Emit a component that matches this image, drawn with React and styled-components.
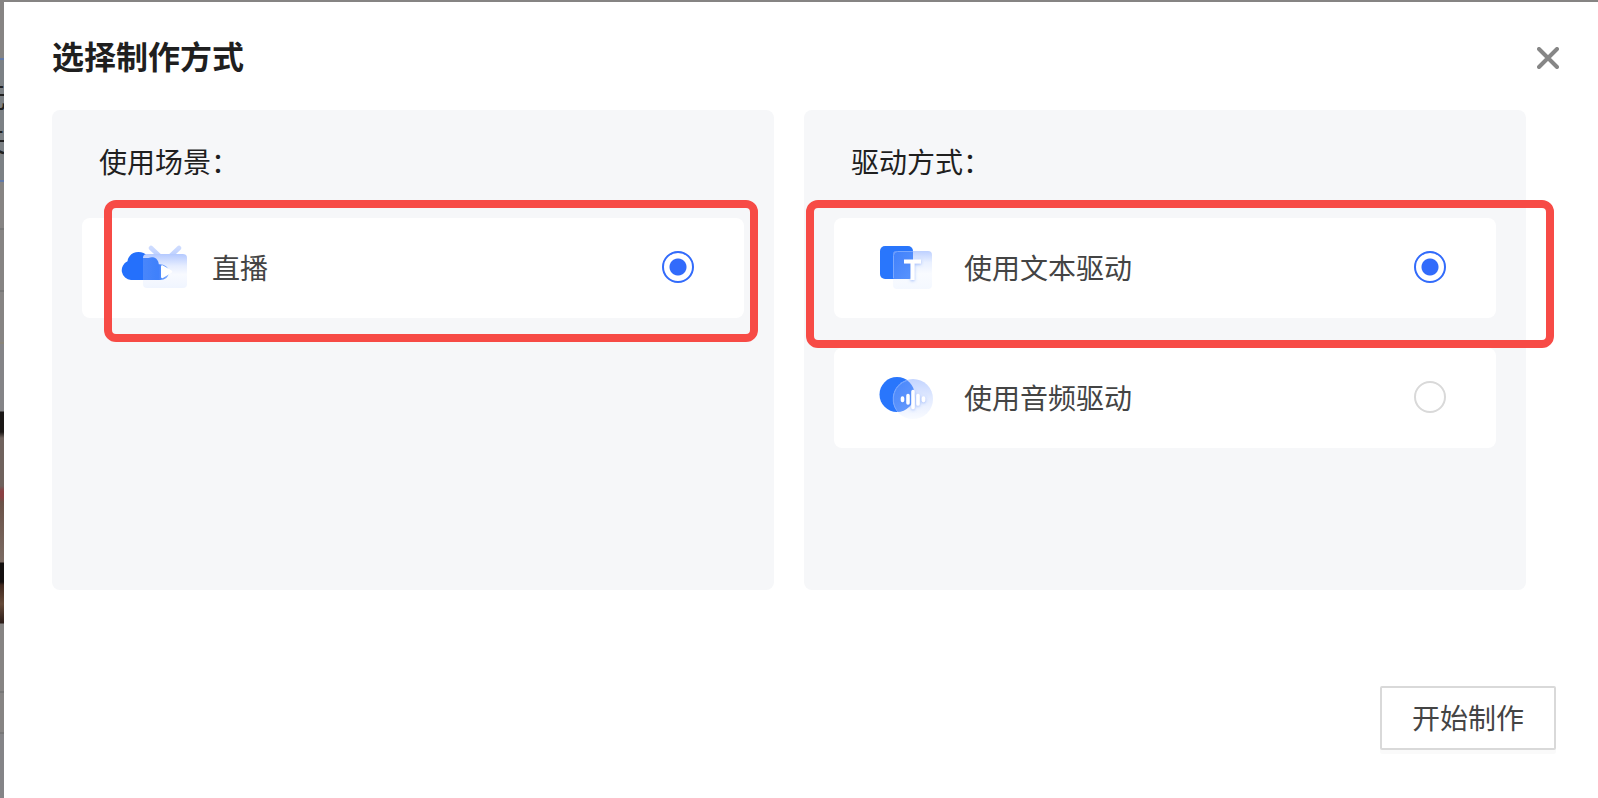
import React, { useState } from 'react';
import styled, { createGlobalStyle } from 'styled-components';

const scenes = [{ value: 'live', label: '直播', icon: 'live' }];

const drivers = [
  { value: 'text', label: '使用文本驱动', icon: 'text' },
  { value: 'audio', label: '使用音频驱动', icon: 'audio' },
];

const LiveIcon = () => (
  <svg width="68" height="46" viewBox="0 0 68 46" aria-hidden="true">
    <defs>
      <linearGradient id="liveGlass" x1="0" y1="0" x2="0" y2="1">
        <stop offset="0" stopColor="#b4c9ff" />
        <stop offset="0.35" stopColor="#e6edff" />
        <stop offset="0.6" stopColor="#f8faff" />
        <stop offset="1" stopColor="#f0f5ff" />
      </linearGradient>
      <linearGradient id="liveAerial" x1="0" y1="0" x2="0" y2="1">
        <stop offset="0" stopColor="#cddbff" />
        <stop offset="1" stopColor="#b8ccff" />
      </linearGradient>
      <linearGradient id="liveCloud" x1="0" y1="0" x2="1" y2="0">
        <stop offset="0" stopColor="#4a87fb" />
        <stop offset="0.65" stopColor="#3f80fb" />
        <stop offset="1" stopColor="#8fb5ff" />
      </linearGradient>
      <clipPath id="liveScreen"><rect x="23" y="10" width="44" height="34" rx="4" /></clipPath>
      <filter id="liveSoft" x="-20%" y="-20%" width="140%" height="140%"><feGaussianBlur stdDeviation="0.6" /></filter>
    </defs>
    <path d="M31 4l9.500 9M59 4l-9.500 9" stroke="url(#liveAerial)" strokeWidth="4.500" strokeLinecap="round" fill="none" />
    <path d="M11 36a9.800 9.800 0 0 1-3.500-18.700C8 12 12.500 8 18.500 8c4.500 0 8.500 2.300 10 6 1.500-.700 3-.900 4.500-.700 3 .400 5.500 3 5.800 7C44 20 49 23 49 28c0 5-4 8-9 8z" fill="#2470fc" />
    <rect x="23" y="10" width="44" height="34" rx="4" fill="url(#liveGlass)" />
    <g clipPath="url(#liveScreen)">
      <path filter="url(#liveSoft)" d="M20 36V14h8.500c1.500-.700 3-.900 4.500-.700 3 .400 5.500 3 5.800 7C44 20 49 23 49 28c0 5-4 8-9 8z" fill="url(#liveCloud)" />
    </g>
    <path d="M41 22.500v10.500c0 1 1 1.500 2 1l8.500-5.200c1-.600 1-1.600 0-2.200L43 21.500c-1-.500-2 0-2 1z" fill="#fff" />
  </svg>
);

const TextIcon = () => (
  <svg width="54" height="46" viewBox="0 0 54 46" aria-hidden="true">
    <defs>
      <linearGradient id="textGlass" x1="0" y1="0" x2="0" y2="1">
        <stop offset="0" stopColor="#bdd0ff" />
        <stop offset="0.3" stopColor="#e9f0ff" />
        <stop offset="0.6" stopColor="#f9fbff" />
        <stop offset="1" stopColor="#f4f8ff" />
      </linearGradient>
      <linearGradient id="textShade" x1="0" y1="0" x2="1" y2="1">
        <stop offset="0" stopColor="#4080fb" />
        <stop offset="1" stopColor="#5a94fd" />
      </linearGradient>
      <filter id="textShadow" x="-30%" y="-30%" width="160%" height="160%">
        <feDropShadow dx="0" dy="1" stdDeviation="1.5" floodColor="#4a80f5" floodOpacity="0.5" />
      </filter>
    </defs>
    <rect x="0" y="2" width="33" height="33" rx="5" fill="#2976fc" />
    <rect x="13" y="7" width="39" height="38" rx="4" fill="url(#textGlass)" />
    <path d="M17 7h16v24a4 4 0 0 1-4 4H13V11a4 4 0 0 1 4-4z" fill="url(#textShade)" />
    <path d="M13.500 34V11.500a4 4 0 0 1 4-4H33" stroke="#79a7fd" fill="none" />
    <path d="M24 17.500h17M32.500 17.500v18.500" stroke="#fff" strokeWidth="4" fill="none" filter="url(#textShadow)" />
  </svg>
);

const AudioIcon = () => (
  <svg width="54" height="46" viewBox="0 0 54 46" overflow="visible" aria-hidden="true">
    <defs>
      <linearGradient id="audioGlass" x1="0" y1="0" x2="0" y2="1">
        <stop offset="0" stopColor="#c3d4ff" />
        <stop offset="0.5" stopColor="#e3ebff" />
        <stop offset="1" stopColor="#f9fbff" />
      </linearGradient>
      <linearGradient id="audioShade" x1="0" y1="0" x2="1" y2="1">
        <stop offset="0" stopColor="#3b7dfb" />
        <stop offset="1" stopColor="#6a9dfd" />
      </linearGradient>
      <clipPath id="audioDisc"><circle cx="33" cy="25" r="20" /></clipPath>
      <filter id="audioShadow" x="-30%" y="-30%" width="160%" height="160%">
        <feDropShadow dx="0" dy="1" stdDeviation="1.5" floodColor="#4a80f5" floodOpacity="0.5" />
      </filter>
    </defs>
    <circle cx="17" cy="20.500" r="17.500" fill="#2976fc" />
    <circle cx="33" cy="25" r="20" fill="url(#audioGlass)" />
    <g clipPath="url(#audioDisc)">
      <circle cx="17" cy="20.500" r="17.500" fill="url(#audioShade)" />
    </g>
    <path d="M16.500 36A19.500 19.500 0 0 1 27 6.500" stroke="#79a7fd" fill="none" />
    <path d="M22.500 24v2.500M28 21.500v7.500M33 17.500v16M38 21.500v8.500M43.500 24v2.500" stroke="#fff" strokeWidth="3.500" strokeLinecap="round" fill="none" filter="url(#audioShadow)" />
  </svg>
);

const icons = { live: LiveIcon, text: TextIcon, audio: AudioIcon };

const OptionGroup = ({ title, name, options, value, onChange, wideIcons, outset }) => (
  <Panel>
    <PanelTitle>{title}</PanelTitle>
    <Options>
      {options.map(option => {
        const Icon = icons[option.icon];
        return (
          <Option key={option.value} $wide={wideIcons}>
            <Icon />
            <OptionLabel $wide={wideIcons}>{option.label}</OptionLabel>
            <Radio
              type="radio"
              name={name}
              value={option.value}
              checked={value === option.value}
              onChange={() => onChange(option.value)}
            />
          </Option>
        );
      })}
    </Options>
    <Marker $outset={outset} />
  </Panel>
);

const App = () => {
  const [scene, setScene] = useState('live');
  const [driver, setDriver] = useState('text');

  return (
    <Page>
      <GlobalStyle />
      <Backdrop aria-hidden="true">
        <BackdropText>无</BackdropText>
        <BackdropText>矢</BackdropText>
      </Backdrop>
      <Dialog role="dialog" aria-labelledby="dialog-title">
        <Header>
          <Title id="dialog-title">选择制作方式</Title>
          <CloseButton type="button" aria-label="关闭">
            <svg width="22" height="22" viewBox="0 0 22 22">
              <path d="M2 2l18 18M20 2L2 20" stroke="#868686" strokeWidth="4" strokeLinecap="round" />
            </svg>
          </CloseButton>
        </Header>
        <Panels>
          <OptionGroup title="使用场景：" name="scene" options={scenes} value={scene} onChange={setScene} wideIcons />
          <OptionGroup title="驱动方式：" name="driver" options={drivers} value={driver} onChange={setDriver} outset />
        </Panels>
        <Footer>
          <StartButton type="button">开始制作</StartButton>
        </Footer>
      </Dialog>
    </Page>
  );
}

const GlobalStyle = createGlobalStyle`
  * {
    box-sizing: border-box;
  }

  body {
    margin: 0;
    background: #868483;
    font-family: "Noto Sans CJK SC", sans-serif;
  }
`;

const Page = styled.div`
  display: flex;
  min-height: 100vh;
  padding-top: 2px;
`;

/* sliver of the dimmed page left of the dialog */
const Backdrop = styled.div`
  width: 4px;
  padding-top: 72px;
  overflow: hidden;
  background: linear-gradient(
    #868483 56px, #6179a8 56px 58px, #7c8185 58px 178px, #6179a8 178px 180px,
    #868483 180px 226px, #777 226px 228px, #868483 228px 288px, #777 288px 290px,
    #868483 290px 340px, #8a8578 340px 342px, #848487 342px 409px,
    #1b1716 410px 430px, #6f625d 436px 484px, #8a4043 489px 495px, #6b5248 500px,
    #7b6b63 560px, #14100f 561px 580px, #40291f 583px, #654a39 602px, #2c1d19 621px,
    #868483 622px 689px, #777 689px 691px, #868483 691px 730px, #777 730px 732px, #848487 732px
  );
`;

const BackdropText = styled.div`
  margin-left: -22px;
  font-size: 28px;
  line-height: 44px;
  white-space: nowrap;
  color: #222;
`;

const Dialog = styled.main`
  flex: 1;
  display: flex;
  flex-direction: column;
  padding: 28px 42px 48px 48px;
  background: #fff;
`;

const Header = styled.header`
  display: flex;
  align-items: flex-start;
  justify-content: space-between;
  margin-bottom: 30px;
`;

const Title = styled.h1`
  margin: 0;
  font-size: 32px;
  font-weight: 700;
  line-height: 50px;
  color: #1f1f1f;
`;

const CloseButton = styled.button`
  display: flex;
  margin: 17px -3px 0 0;
  padding: 0;
  border: 0;
  background: none;
  cursor: pointer;
`;

const Panels = styled.div`
  display: grid;
  grid-template-columns: 1fr 1fr;
  gap: 30px;
  margin-right: 30px;
`;

const Panel = styled.section`
  position: relative;
  min-height: 480px;
  padding: 30px;
  border-radius: 8px;
  background: #f6f7f9;
`;

const PanelTitle = styled.h2`
  margin: 0 0 36px;
  padding-left: 17px;
  font-size: 28px;
  font-weight: 400;
  line-height: 42px;
  color: #1f1f1f;
`;

const Options = styled.div`
  display: flex;
  flex-direction: column;
  gap: 30px;
`;

const Option = styled.label`
  display: flex;
  align-items: center;
  height: 100px;
  padding: 0 50px 2px ${props => (props.$wide ? '38px' : '46px')};
  border-radius: 8px;
  background: #fff;
  cursor: pointer;
`;

const OptionLabel = styled.span`
  flex: 1;
  margin-left: ${props => (props.$wide ? '24px' : '30px')};
  font-size: 28px;
  line-height: 44px;
  color: #444;
`;

const Radio = styled.input`
  appearance: none;
  width: 32px;
  height: 32px;
  margin: 0;
  border: 2px solid ${props => (props.checked ? '#326bfb' : '#d9d9d9')};
  border-radius: 50%;
  background: ${props => (props.checked ? 'radial-gradient(circle, #326bfb 8px, #fff 9px)' : '#fff')};
`;

/* highlight frame drawn over the first option */
const Marker = styled.div`
  position: absolute;
  top: 90px;
  left: ${props => (props.$outset ? '2px' : '52px')};
  right: ${props => (props.$outset ? '-28px' : '16px')};
  height: ${props => (props.$outset ? '148px' : '142px')};
  border: 8px solid #f74b46;
  border-radius: 12px;
  pointer-events: none;
`;

const Footer = styled.footer`
  display: flex;
  justify-content: flex-end;
  margin-top: auto;
`;

const StartButton = styled.button`
  padding: 7px 30px 9px;
  border: 2px solid #d9d9d9;
  border-radius: 2px;
  background: #fff;
  box-shadow: 0 4px 0 rgba(0, 0, 0, 0.02);
  font-family: inherit;
  font-size: 28px;
  line-height: 44px;
  color: #444;
  cursor: pointer;
`;

export default App;
